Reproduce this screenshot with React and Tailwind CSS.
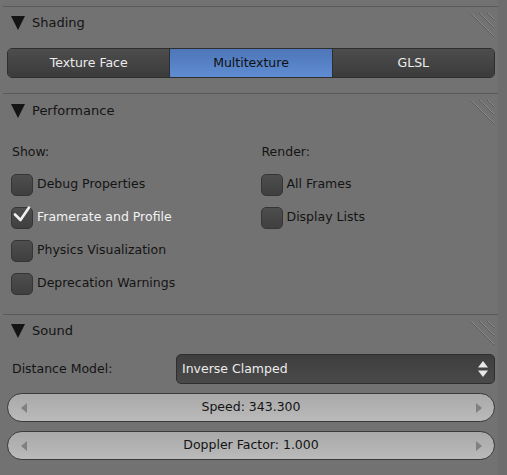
const Grip = () => (
    <svg width="30" height="30" viewBox="0 0 30 30" className="absolute right-[1px] top-[3px]">
        <g strokeWidth="1">
            <line x1="3" y1="3" x2="27" y2="27" stroke="#5c5c5c" />
            <line x1="4" y1="3" x2="27" y2="26" stroke="#8a8a8a" />
            <line x1="12" y1="3" x2="27" y2="18" stroke="#5c5c5c" />
            <line x1="13" y1="3" x2="27" y2="17" stroke="#8a8a8a" />
            <line x1="20" y1="3" x2="27" y2="10" stroke="#5c5c5c" />
            <line x1="21" y1="3" x2="27" y2="9" stroke="#8a8a8a" />
        </g>
    </svg>
);

const PanelHeader = ({title, height}) => (
    <div className="relative flex items-center pt-[2px] border-t border-[#5a5a5a]" style={{height}}>
        <svg width="14" height="14" viewBox="0 0 14 14" className="ml-[8px] mr-[7px]">
            <polygon points="0,0 14,0 7,14" fill="#141414" />
        </svg>
        <span className="text-[13px] text-[#141414]">{title}</span>
        <Grip />
    </div>
);

const Checkbox = ({label, checked}) => (
    <div className="flex items-center h-[33px]">
        <div className="relative w-[22px] h-[22px] rounded-[5px] border border-[#353535] bg-gradient-to-b from-[#4e4e4e] to-[#3f3f3f] mr-[4px]">
            {checked && (
                <svg width="24" height="24" viewBox="0 0 24 24" className="absolute left-[0px] top-[-6px]">
                    <polyline points="3,12.5 8.5,18 17,5.5" fill="none" stroke="#f0f0f0" strokeWidth="2.6" strokeLinecap="round" strokeLinejoin="round" />
                </svg>
            )}
        </div>
        <span className={checked ? "text-[12.5px] text-[#f2f2f2]" : "text-[12.5px] text-[#141414]"}>{label}</span>
    </div>
);

const Slider = ({text}) => (
    <div className="relative flex items-center justify-center h-[29px] rounded-full border border-[#3a3a3a] bg-gradient-to-b from-[#a9a9a9] to-[#bababa] text-[12.5px] text-[#141414]">
        <svg width="6" height="10" viewBox="0 0 6 10" className="absolute left-[13px]">
            <polygon points="6,0 6,10 0,5" fill="#808080" />
        </svg>
        {text}
        <svg width="6" height="10" viewBox="0 0 6 10" className="absolute right-[12px]">
            <polygon points="0,0 0,10 6,5" fill="#808080" />
        </svg>
    </div>
);

export default function App() {
    return (
        <div className="w-[507px] h-[475px] bg-[#727272] font-['DejaVu_Sans',sans-serif] flex overflow-hidden">
            <div className="w-[498px] pl-[3px] pt-[6px]">
                {/* Shading */}
                <PanelHeader title="Shading" height={31} />
                <div className="pt-[11px] pb-[15px] pl-[4px] pr-[3px]">
                    <div className="flex h-[30px] rounded-[5px] border border-[#2e2e2e] overflow-hidden text-[12.5px]">
                        <div className="flex-1 flex items-center justify-center bg-gradient-to-b from-[#4d4d4d] to-[#3b3b3b] text-[#ececec]">Texture Face</div>
                        <div className="flex-1 flex items-center justify-center border-x border-[#2e2e2e] bg-gradient-to-b from-[#4e76b8] to-[#5f8cd2] text-[#101010]">Multitexture</div>
                        <div className="flex-1 flex items-center justify-center bg-gradient-to-b from-[#4d4d4d] to-[#3b3b3b] text-[#ececec]">GLSL</div>
                    </div>
                </div>

                {/* Performance */}
                <PanelHeader title="Performance" height={33} />
                <div className="grid grid-cols-2 pl-[8px] pt-[16px] pb-[14px]">
                    <div>
                        <div className="h-[20px] flex items-center text-[12.5px] text-[#141414] ml-[1px] mb-[6px]">Show:</div>
                        <Checkbox label="Debug Properties" />
                        <Checkbox label="Framerate and Profile" checked />
                        <Checkbox label="Physics Visualization" />
                        <Checkbox label="Deprecation Warnings" />
                    </div>
                    <div className="pl-[6px]">
                        <div className="h-[20px] flex items-center text-[12.5px] text-[#141414] ml-[1px] mb-[6px]">Render:</div>
                        <Checkbox label="All Frames" />
                        <Checkbox label="Display Lists" />
                    </div>
                </div>

                {/* Sound */}
                <PanelHeader title="Sound" height={31} />
                <div className="pt-[9px] pl-[4px] pr-[3px] flex flex-col gap-[9px]">
                    <div className="flex items-center h-[30px]">
                        <span className="w-[169px] pl-[5px] text-[12.5px] text-[#141414]">Distance Model:</span>
                        <div className="relative flex-1 h-[30px] flex items-center pl-[5px] rounded-[5px] border border-[#2e2e2e] bg-gradient-to-b from-[#3e3e3e] to-[#4a4a4a] text-[12.5px] text-[#ececec]">
                            Inverse Clamped
                            <svg width="10" height="18" viewBox="0 0 10 18" className="absolute right-[6px]">
                                <polygon points="5,1 10,7.5 0,7.5" fill="#e8e8e8" />
                                <polygon points="0,10.5 10,10.5 5,17" fill="#e8e8e8" />
                            </svg>
                        </div>
                    </div>
                    <Slider text="Speed: 343.300" />
                    <Slider text="Doppler Factor: 1.000" />
                </div>
            </div>
            <div className="flex-1 bg-[#6d6d6d]" />
        </div>
    );
}
